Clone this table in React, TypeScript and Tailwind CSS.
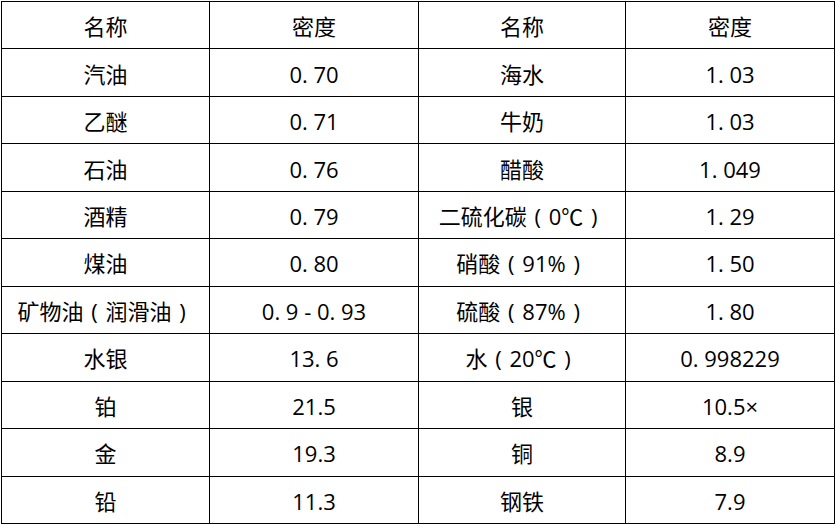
const rows: [string, string, string, string][] = [
  ['名称', '密度', '名称', '密度'],
  ['汽油', '0. 70', '海水', '1. 03'],
  ['乙醚', '0. 71', '牛奶', '1. 03'],
  ['石油', '0. 76', '醋酸', '1. 049'],
  ['酒精', '0. 79', '二硫化碳（0℃）', '1. 29'],
  ['煤油', '0. 80', '硝酸（91%）', '1. 50'],
  ['矿物油（润滑油）', '0. 9 - 0. 93', '硫酸（87%）', '1. 80'],
  ['水银', '13. 6', '水（20℃）', '0. 998229'],
  ['铂', '21.5', '银', '10.5×'],
  ['金', '19.3', '铜', '8.9'],
  ['铅', '11.3', '钢铁', '7.9'],
];

// full-width brackets drawn centred in a 1em box, as YaHei does
function Cell({ text }: { text: string }) {
  const parts = text.split(/([（）])/);
  return (
    <>
      {parts.map((p, k) =>
        p === '（' || p === '）' ? (
          <span key={k} className="inline-block w-[1em] text-center">
            {p === '（' ? '(' : ')'}
          </span>
        ) : (
          <span key={k}>{p}</span>
        )
      )}
    </>
  );
}

export default function App() {
  return (
    <div className="w-[836px] h-[526px] bg-white overflow-hidden pt-px pl-px">
      <div
        className="grid grid-cols-[208px_209px_207px_209px] grid-rows-11 w-[834px] h-[523px] border-l border-t border-black text-black text-[22px]"
        style={{ fontFamily: '"Open Sans", "Noto Sans CJK SC", sans-serif' }}
      >
        {rows.map((row, i) =>
          row.map((cell, j) => (
            <div
              key={`${i}-${j}`}
              className="flex items-center justify-center border-r border-b border-black pt-[3px] whitespace-nowrap"
            >
              <Cell text={cell} />
            </div>
          ))
        )}
      </div>
    </div>
  );
}
